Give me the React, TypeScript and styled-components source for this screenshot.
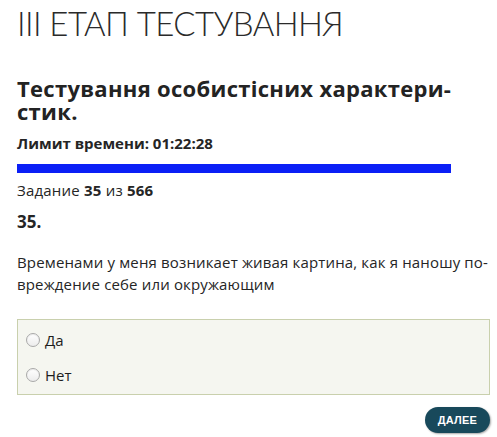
import React from 'react';
import styled, { createGlobalStyle } from 'styled-components';

const GlobalStyle = createGlobalStyle`
  html, body {
    margin: 0;
    padding: 0;
    background: #ffffff;
  }
  body {
    font-family: 'Open Sans', 'Liberation Sans', Arial, sans-serif;
    color: #252525;
    -webkit-font-smoothing: antialiased;
  }
`;

const Page = styled.div`
  padding: 3px 7px 4px 17px;
`;

const StageTitle = styled.h1`
  margin: 0;
  font-family: Lato, 'Liberation Sans', sans-serif;
  font-weight: 300;
  font-size: 33px;
  line-height: 40px;
  letter-spacing: -0.6px;
  color: #2a2a2a;
`;

const TestTitle = styled.h2`
  margin: 34px 0 0;
  font-size: 22px;
  line-height: 23px;
  font-weight: 700;
  letter-spacing: 0.3px;
  width: 445px;
  color: #232323;
`;

const TimeLimit = styled.div`
  margin-top: 10px;
  font-size: 15px;
  line-height: 20px;
  font-weight: 700;
`;

const Progress = styled.div`
  margin-top: 11px;
  width: 434px;
  height: 9px;
  background: #e6e6e6;
`;

const ProgressFill = styled.div`
  height: 100%;
  background: #0b1ff6;
`;

const Counter = styled.div`
  margin-top: 7px;
  font-size: 15px;
  line-height: 20px;
  letter-spacing: 0.2px;

  b {
    font-weight: 700;
  }
`;

const Number = styled.div`
  margin-top: 11px;
  font-size: 17px;
  line-height: 22px;
  font-weight: 700;
`;

const Question = styled.p`
  margin: 18px 0 0;
  font-size: 15px;
  line-height: 22px;
  letter-spacing: 0.15px;
  max-width: 473px;
`;

const Options = styled.div`
  margin-top: 24px;
  border: 1px solid #c9d0ad;
  background: #f5f6f0;
  padding: 2px 8px;
  display: flex;
  flex-direction: column;
`;

const Option = styled.label`
  display: flex;
  align-items: center;
  gap: 5px;
  height: 35px;
  font-size: 15px;
  color: #1e1e1e;
  cursor: pointer;
`;

const Radio = styled.input.attrs({ type: 'radio' })`
  appearance: none;
  margin: 0;
  width: 14px;
  height: 14px;
  border-radius: 50%;
  border: 1px solid #a9a9a9;
  background: linear-gradient(#ffffff, #ececec);
  box-shadow: inset 0 1px 1px rgba(0, 0, 0, 0.08);
`;

const Footer = styled.div`
  display: flex;
  justify-content: flex-end;
  margin-top: 12px;
`;

const NextButton = styled.button`
  border: none;
  border-radius: 14px;
  height: 26px;
  padding: 0 13px;
  background: #18495b;
  color: #ffffff;
  font-family: 'Liberation Sans', Arial, sans-serif;
  font-weight: 700;
  font-size: 11px;
  letter-spacing: 0.2px;
  text-transform: uppercase;
  box-shadow: 1px 1px 2px rgba(0, 0, 0, 0.35);
  cursor: pointer;
`;

const App: React.FC = () => {
  const current = 35;
  const total = 566;

  return (
    <Page>
      <GlobalStyle />
      <StageTitle>III ЕТАП ТЕСТУВАННЯ</StageTitle>
      <TestTitle lang="uk">Тестування особистісних характери{'\u00AD'}стик.</TestTitle>
      <TimeLimit>Лимит времени: 01:22:28</TimeLimit>
      <Progress>
        <ProgressFill style={{ width: '100%' }} />
      </Progress>
      <Counter>
        Задание <b>{current}</b> из <b>{total}</b>
      </Counter>
      <Number>{current}.</Number>
      <Question lang="ru">
        Временами у меня возникает живая картина, как я наношу по{'\u00AD'}вреждение себе или
        окружающим
      </Question>
      <Options>
        <Option>
          <Radio name="answer" value="yes" />
          Да
        </Option>
        <Option>
          <Radio name="answer" value="no" />
          Нет
        </Option>
      </Options>
      <Footer>
        <NextButton>Далее</NextButton>
      </Footer>
    </Page>
  );
};

export default App;
